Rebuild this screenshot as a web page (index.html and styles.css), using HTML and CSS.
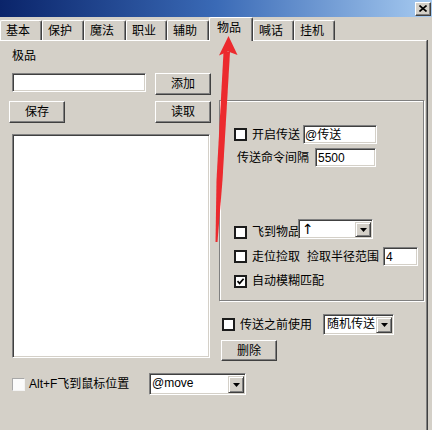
FILE: index.html
```html
<!DOCTYPE html>
<html lang="zh-cn">
<head>
  <meta charset="UTF-8">
  <title>物品</title>
  <link rel="stylesheet" href="styles.css">
</head>
<body>
  <div class="window">

    <div class="titlebar">
      <span class="close">
        <svg width="8" height="7" viewBox="0 0 8 7"><path d="M0.5 0.5 L7.5 6.5 M7.5 0.5 L0.5 6.5" stroke="#000" stroke-width="1.6"/></svg>
      </span>
    </div>

    <div class="tabs">
      <div class="tab">基本</div>
      <div class="tab">保护</div>
      <div class="tab">魔法</div>
      <div class="tab narrow">职业</div>
      <div class="tab">辅助</div>
      <div class="tab active">物品</div>
      <div class="tab narrow">喊话</div>
      <div class="tab narrow">挂机</div>
    </div>

    <div class="panel">
      <div class="columns">

        <div class="left">
          <div class="label">极品</div>
          <div class="row r-add">
            <div class="field f-item"></div>
            <button class="btn">添加</button>
          </div>
          <div class="row r-save">
            <button class="btn">保存</button>
            <button class="btn">读取</button>
          </div>
          <div class="field listbox"></div>
        </div>

        <div class="right">
          <div class="group">
            <div class="row g1">
              <span class="cb"></span>
              <span class="cb-label">开启传送</span>
              <div class="field f-send">@传送</div>
            </div>
            <div class="row g2">
              <span class="text-interval">传送命令间隔</span>
              <div class="field f-interval">5500</div>
            </div>
            <div class="row g3">
              <span class="cb"></span>
              <span class="cb-label">飞到物品</span>
              <div class="combo c-fly">
                <span class="combo-text up">↑</span>
                <span class="drop"><svg width="7" height="4" viewBox="0 0 7 4"><polygon points="0,0 7,0 3.5,4" fill="#000"/></svg></span>
              </div>
            </div>
            <div class="row g4">
              <span class="cb"></span>
              <span class="cb-label">走位捡取</span>
              <span class="text-radius">捡取半径范围</span>
              <div class="field f-radius">4</div>
            </div>
            <div class="row g5">
              <span class="cb checked">
                <svg width="9" height="9" viewBox="0 0 9 9"><polyline points="1.5,4.2 3.6,6.4 7.6,1.8" fill="none" stroke="#000" stroke-width="1.7"/></svg>
              </span>
              <span class="cb-label">自动模糊匹配</span>
            </div>
          </div>

          <div class="row r-before">
            <span class="cb"></span>
            <span class="cb-label">传送之前使用</span>
            <div class="combo c-random">
              <span class="combo-text">随机传送</span>
              <span class="drop"><svg width="7" height="4" viewBox="0 0 7 4"><polygon points="0,0 7,0 3.5,4" fill="#000"/></svg></span>
            </div>
          </div>
          <button class="btn btn-del">删除</button>
        </div>

      </div>

      <div class="row r-bottom">
        <span class="cb flat"></span>
        <span class="text-alt">Alt+F飞到鼠标位置</span>
        <div class="combo c-move">
          <span class="combo-text">@move</span>
          <span class="drop"><svg width="7" height="4" viewBox="0 0 7 4"><polygon points="0,0 7,0 3.5,4" fill="#000"/></svg></span>
        </div>
      </div>
    </div>

    <!-- red arrow drawn over the screenshot -->
    <svg class="arrow" width="432" height="430" viewBox="0 0 432 430">
      <polygon points="223.5,52 230,52 222.5,180 217.5,242 215.5,242 216.5,180" fill="#ec2a2e"/>
      <polygon points="228.5,36 237.5,55 228,51.5 219,55.5" fill="#ec2a2e"/>
    </svg>

  </div>
</body>
</html>
```

FILE: styles.css
```css
* {
  box-sizing: border-box;
}

body {
  margin: 0;
  background: #d4d0c8;
  font: 12px/14px "Liberation Sans", "Noto Sans CJK SC", sans-serif;
  color: #000;
}

.window {
  position: relative;
  width: 432px;
  height: 430px;
  overflow: hidden;
}

/* title bar */
.titlebar {
  height: 17px;
  background: linear-gradient(to right, #0a246a, #3a6ab6 50%, #a6caf0);
  display: flex;
  justify-content: flex-end;
  align-items: center;
  padding-right: 1px;
}

.close {
  width: 16px;
  height: 14px;
  background: #d4d0c8;
  border: 1px solid;
  border-color: #fff #404040 #404040 #fff;
  box-shadow: inset -1px -1px 0 #808080;
  display: flex;
  align-items: center;
  justify-content: center;
}

/* tabs */
.tabs {
  display: flex;
  align-items: flex-end;
  height: 23px;
}

.tab {
  width: 42px;
  height: 20px;
  padding: 3px 0 0 5px;
  border-left: 1px solid #fff;
  border-top: 1px solid #fff;
  border-right: 1px solid #404040;
  box-shadow: inset -1px 0 0 #808080;
  border-radius: 2px 2px 0 0;
  white-space: nowrap;
}

.tab.narrow { width: 41px; }

.tab.active {
  width: 44px;
  height: 24px;
  margin-bottom: -1px;
  padding: 3px 0 0 7px;
  position: relative;
  z-index: 1;
  background: #d4d0c8;
}

/* panel */
.panel {
  width: 427px;
  height: 390px;
  border-top: 1px solid #fff;
  border-right: 1px solid #808080;
  box-shadow: 1px 0 0 #404040;
  display: flex;
  flex-direction: column;
}

.columns {
  display: flex;
  padding-left: 9px;
  column-gap: 8px;
}

.row {
  display: flex;
  align-items: center;
}

/* shared controls */
.field {
  background: #fff;
  border: 1px solid;
  border-color: #808080 #fff #fff #808080;
  box-shadow: inset 1px 1px 0 #404040, inset -1px -1px 0 #d4d0c8;
  padding: 2px 0 0 2px;
  white-space: nowrap;
  overflow: hidden;
}

.btn {
  font: inherit;
  color: #000;
  background: #d4d0c8;
  width: 56px;
  height: 22px;
  padding: 0;
  border: 1px solid;
  border-color: #fff #404040 #404040 #fff;
  box-shadow: inset -1px -1px 0 #808080;
}

.cb {
  width: 13px;
  height: 13px;
  flex: none;
  background: #fff;
  border: 2px solid #1c1c1c;
  display: flex;
  align-items: center;
  justify-content: center;
}

.cb.flat {
  border: 1px solid;
  border-color: #a8a8a8 #f4f4f4 #f4f4f4 #a8a8a8;
  background: #fbfbfb;
}

.cb-label {
  margin-left: 5px;
  white-space: nowrap;
}

.combo {
  display: flex;
  background: #fff;
  border: 1px solid;
  border-color: #808080 #fff #fff #808080;
  box-shadow: inset 1px 1px 0 #404040, inset -1px -1px 0 #d4d0c8;
  padding: 2px 1px 1px 2px;
}

.combo-text {
  flex: 1;
  overflow: hidden;
  white-space: nowrap;
  line-height: 15px;
}

.combo-text.up {
  font: 14px/15px "DejaVu Sans", sans-serif;
  padding-left: 1px;
}

.drop {
  width: 16px;
  flex: none;
  background: #d4d0c8;
  border: 1px solid;
  border-color: #d4d0c8 #404040 #404040 #d4d0c8;
  box-shadow: inset 1px 1px 0 #fff, inset -1px -1px 0 #808080;
  display: flex;
  align-items: center;
  justify-content: center;
}

/* left column */
.left {
  width: 202px;
  display: flex;
  flex-direction: column;
}

.label {
  margin: 8px 0 0 3px;
}

.r-add {
  margin-top: 10px;
  justify-content: space-between;
  align-items: flex-start;
}

.f-item {
  margin-left: 3px;
  width: 134px;
  height: 19px;
}

.r-save {
  margin-top: 6px;
  justify-content: space-between;
}

.listbox {
  margin: 11px 0 0 3px;
  width: 198px;
  height: 224px;
}

/* right column */
.right {
  width: 206px;
  display: flex;
  flex-direction: column;
  align-items: flex-start;
}

.group {
  margin-top: 59px;
  width: 205px;
  height: 201px;
  border: 1px solid #808080;
  box-shadow: inset 1px 1px 0 #fff, 1px 1px 0 #fff;
  padding: 24px 0 0 14px;
}

.g1 { height: 19px; }

.f-send {
  margin-left: 3px;
  width: 74px;
  height: 19px;
  padding-left: 1px;
}

.g2 {
  margin-top: 4px;
  height: 19px;
}

.text-interval { margin-left: 3px; }

.f-interval {
  margin-left: 6px;
  width: 61px;
  height: 19px;
}

.g3 {
  margin-top: 52px;
  height: 20px;
  align-items: flex-end;
}

.c-fly {
  margin-left: -2px;
  width: 75px;
  height: 20px;
}

.g4 {
  margin-top: 8px;
  height: 19px;
}

.text-radius { margin-left: 7px; }

.f-radius {
  margin-left: 4px;
  width: 35px;
  height: 19px;
}

.g5 {
  margin-top: 8px;
  height: 14px;
}

.r-before {
  margin-top: 13px;
  height: 21px;
  padding-left: 3px;
}

.c-random {
  margin-left: 11px;
  width: 71px;
  height: 21px;
}

.c-random .combo-text {
  padding-left: 1px;
}

.btn-del {
  margin: 5px 0 0 2px;
  height: 21px;
}

/* bottom row */
.r-bottom {
  margin-top: 12px;
  height: 22px;
  padding-left: 12px;
}

.text-alt {
  margin-left: 4px;
  width: 120px;
  white-space: nowrap;
}

.c-move {
  width: 97px;
  height: 22px;
}

.arrow {
  position: absolute;
  top: 0;
  left: 0;
  pointer-events: none;
  z-index: 5;
}
```
